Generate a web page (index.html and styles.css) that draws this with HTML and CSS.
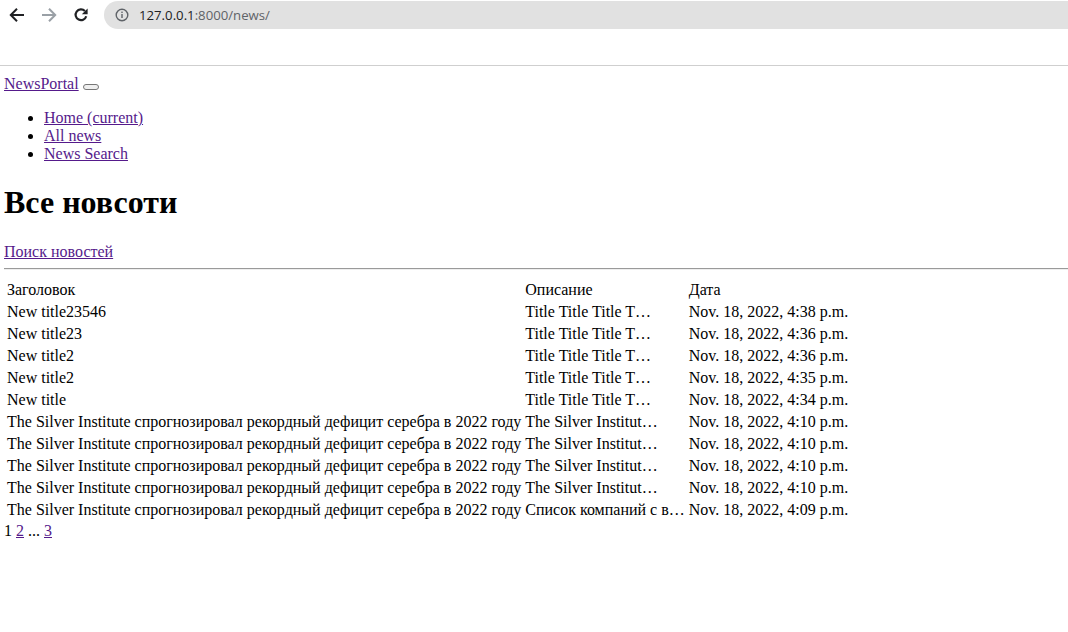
FILE: index.html
```html
<!DOCTYPE html>
<html lang="ru">
<head>
<meta charset="utf-8">
<title>NewsPortal</title>
<link rel="stylesheet" href="styles.css">
</head>
<body>
<div class="chrome">
  <div class="toolbar">
    <span class="nav-icon">
      <svg width="16" height="16" viewBox="0 0 16 16"><path d="M15 8H2.5M8 1.8L1.8 8L8 14.2" fill="none" stroke="#202124" stroke-width="2"/></svg>
    </span>
    <span class="nav-icon">
      <svg width="16" height="16" viewBox="0 0 16 16"><path d="M1 8H13.5M8 1.8L14.2 8L8 14.2" fill="none" stroke="#9aa0a6" stroke-width="2"/></svg>
    </span>
    <span class="nav-icon">
      <svg width="16" height="16" viewBox="0 0 16 16"><path d="M13.2 9.2A5.4 5.4 0 1 1 11.9 4" fill="none" stroke="#202124" stroke-width="2.2"/><path d="M14.6 1.4V7.2H8.8Z" fill="#202124"/></svg>
    </span>
    <div class="omnibox">
      <svg class="info" width="14" height="14" viewBox="0 0 14 14"><circle cx="7" cy="7" r="5.8" fill="none" stroke="#5f6368" stroke-width="1.4"/><rect x="6.3" y="6" width="1.4" height="4" fill="#5f6368"/><rect x="6.3" y="3.6" width="1.4" height="1.4" fill="#5f6368"/></svg>
      <span class="url"><span class="host">127.0.0.1</span>:8000/news/</span>
    </div>
  </div>
</div>
<div class="page">
  <nav class="navbar">
    <a class="brand" href="#">NewsPortal</a> <button class="toggler" type="button"></button>
    <ul class="nav-list">
      <li><a href="#">Home (current)</a></li>
      <li><a href="#">All news</a></li>
      <li><a href="#">News Search</a></li>
    </ul>
  </nav>
  <h1 class="title">Все новсоти</h1>
  <a href="#">Поиск новостей</a>
  <hr class="rule">
  <table class="news">
    <tr><td>Заголовок</td><td>Описание</td><td>Дата</td></tr>
    <tr><td>New title23546</td><td>Title Title Title T…</td><td>Nov. 18, 2022, 4:38 p.m.</td></tr>
    <tr><td>New title23</td><td>Title Title Title T…</td><td>Nov. 18, 2022, 4:36 p.m.</td></tr>
    <tr><td>New title2</td><td>Title Title Title T…</td><td>Nov. 18, 2022, 4:36 p.m.</td></tr>
    <tr><td>New title2</td><td>Title Title Title T…</td><td>Nov. 18, 2022, 4:35 p.m.</td></tr>
    <tr><td>New title</td><td>Title Title Title T…</td><td>Nov. 18, 2022, 4:34 p.m.</td></tr>
    <tr><td>The Silver Institute спрогнозировал рекордный дефицит серебра в 2022 году</td><td>The Silver Institut…</td><td>Nov. 18, 2022, 4:10 p.m.</td></tr>
    <tr><td>The Silver Institute спрогнозировал рекордный дефицит серебра в 2022 году</td><td>The Silver Institut…</td><td>Nov. 18, 2022, 4:10 p.m.</td></tr>
    <tr><td>The Silver Institute спрогнозировал рекордный дефицит серебра в 2022 году</td><td>The Silver Institut…</td><td>Nov. 18, 2022, 4:10 p.m.</td></tr>
    <tr><td>The Silver Institute спрогнозировал рекордный дефицит серебра в 2022 году</td><td>The Silver Institut…</td><td>Nov. 18, 2022, 4:10 p.m.</td></tr>
    <tr><td>The Silver Institute спрогнозировал рекордный дефицит серебра в 2022 году</td><td>Список компаний с в…</td><td>Nov. 18, 2022, 4:09 p.m.</td></tr>
  </table>
  <div class="pager">1 <a href="#">2</a> ... <a href="#">3</a></div>
</div>
</body>
</html>
```

FILE: styles.css
```css
html, body {
  margin: 0;
  padding: 0;
  background: #fff;
  overflow: hidden;
}

body {
  font-family: "Liberation Serif", "Times New Roman", serif;
  font-size: 16px;
  color: #000;
}

.chrome {
  height: 65px;
  border-bottom: 1px solid #cfcfcf;
  background: #fff;
}

.toolbar {
  display: flex;
  align-items: center;
  height: 30px;
  padding-left: 9px;
}

.nav-icon {
  display: flex;
  width: 16px;
  height: 16px;
  margin-right: 16px;
}

.omnibox {
  flex: none;
  display: flex;
  align-items: center;
  margin-left: -1px;
  width: 1000px;
  height: 28px;
  border-radius: 14px;
  background: #e1e1e1;
  padding-left: 11px;
  font-family: "Open Sans", "Noto Sans", sans-serif;
  font-size: 13.2px;
  color: #5f6368;
}

.info {
  margin-right: 10px;
}

.host {
  color: #202124;
}

.page {
  padding: 9px 0 8px 4px;
}

a {
  color: #551a8b;
  text-decoration: underline;
}

.toggler {
  display: inline-block;
  width: 16px;
  height: 6px;
  padding: 0;
  border: 1px solid #767676;
  border-radius: 3px;
  background: #efefef;
  vertical-align: baseline;
}

.nav-list {
  margin: 16px 0;
  padding-left: 40px;
}

.title {
  font-size: 32px;
  font-weight: bold;
  margin: 21.44px 0;
}

.rule {
  margin: 7px 0 8px;
  border: 0;
  border-top: 1px solid #9a9a9a;
  border-bottom: 1px solid #eeeeee;
  height: 0;
}

.news {
  border-collapse: separate;
  border-spacing: 2px;
}

.news td {
  padding: 1px;
  white-space: nowrap;
}
```
